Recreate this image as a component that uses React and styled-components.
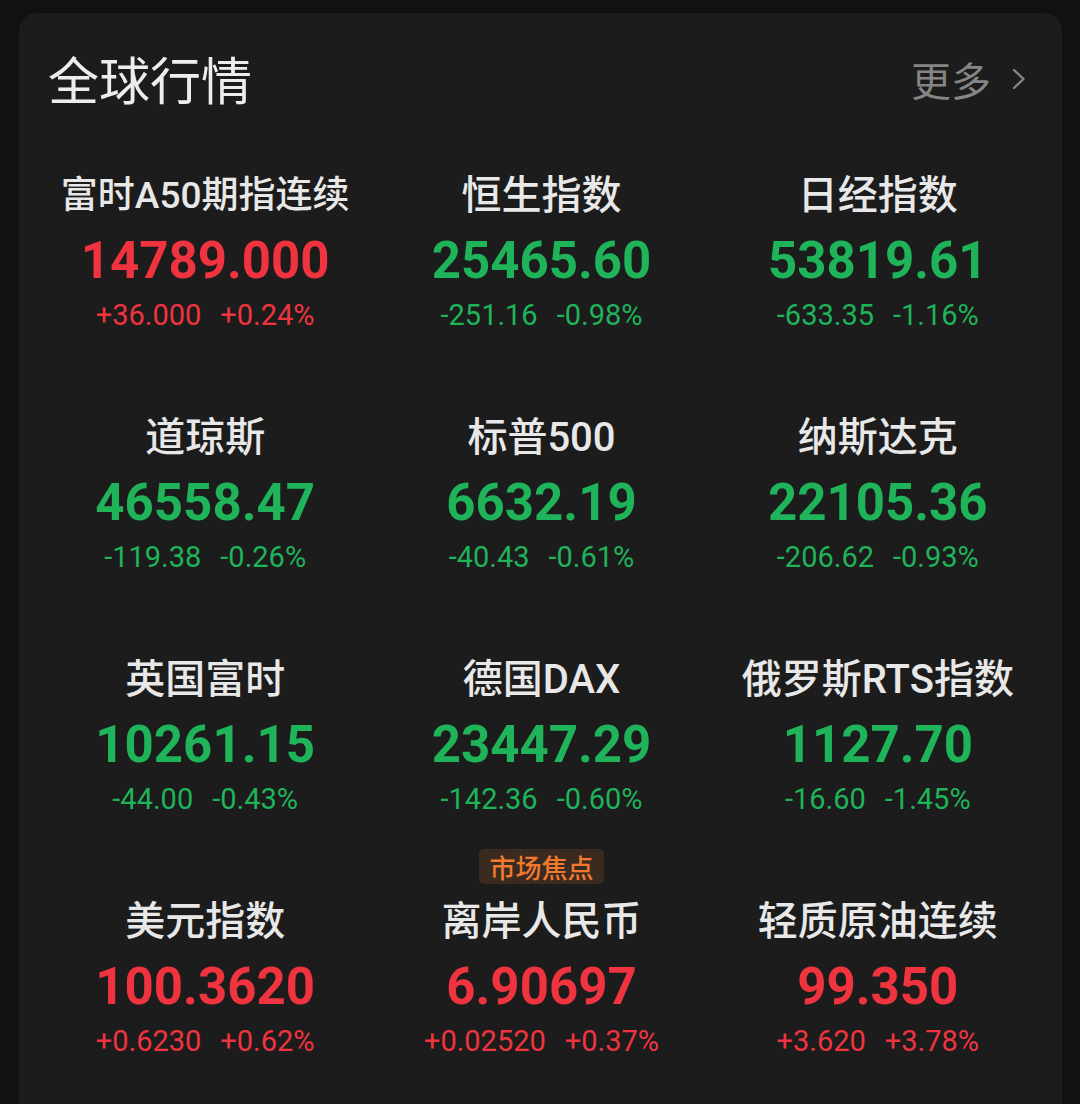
import React from 'react';
import styled, { createGlobalStyle } from 'styled-components';

const GlobalStyle = createGlobalStyle`
  html, body {
    margin: 0;
    padding: 0;
    overflow: hidden;
    background: #111111;
  }
`;

const UP = '#f0343f';
const DOWN = '#1fb35a';

const quotes = [
  { name: '富时A50期指连续', small: true, price: '14789.000', chg: '+36.000', pct: '+0.24%', up: true },
  { name: '恒生指数', price: '25465.60', chg: '-251.16', pct: '-0.98%' },
  { name: '日经指数', price: '53819.61', chg: '-633.35', pct: '-1.16%' },
  { name: '道琼斯', price: '46558.47', chg: '-119.38', pct: '-0.26%' },
  { name: '标普500', price: '6632.19', chg: '-40.43', pct: '-0.61%' },
  { name: '纳斯达克', price: '22105.36', chg: '-206.62', pct: '-0.93%' },
  { name: '英国富时', price: '10261.15', chg: '-44.00', pct: '-0.43%' },
  { name: '德国DAX', price: '23447.29', chg: '-142.36', pct: '-0.60%' },
  { name: '俄罗斯RTS指数', price: '1127.70', chg: '-16.60', pct: '-1.45%' },
  { name: '美元指数', price: '100.3620', chg: '+0.6230', pct: '+0.62%', up: true },
  { name: '离岸人民币', tag: '市场焦点', price: '6.90697', chg: '+0.02520', pct: '+0.37%', up: true },
  { name: '轻质原油连续', price: '99.350', chg: '+3.620', pct: '+3.78%', up: true },
];

const Page = styled.div`
  padding: 13px 18px 0 19px;
`;

const Card = styled.section`
  background: #1c1c1c;
  border-radius: 18px;
  min-height: 1120px;
  padding: 33px 16px 0 18px;
`;

const Header = styled.header`
  display: flex;
  align-items: center;
  justify-content: space-between;
  padding: 0 19px 0 11px;
`;

const Title = styled.h2`
  margin: 0;
  font-family: "Noto Sans CJK SC", sans-serif;
  font-weight: 400;
  font-size: 51px;
  line-height: 62px;
  color: #ededed;
`;

const More = styled.a`
  display: flex;
  align-items: center;
  gap: 20px;
  font-family: "Noto Sans CJK SC", sans-serif;
  font-size: 40px;
  line-height: 62px;
  color: #858585;
  margin-top: 2px;
`;

const Grid = styled.div`
  display: grid;
  grid-template-columns: repeat(3, 1fr);
  margin-top: 22px;
`;

const Cell = styled.div`
  display: flex;
  flex-direction: column;
  align-items: center;
  padding-bottom: 41px;
`;

const TagSlot = styled.div`
  height: 40px;
  display: flex;
  align-items: flex-start;
  justify-content: center;
`;

const Tag = styled.span`
  display: inline-block;
  height: 35px;
  line-height: 35px;
  margin-top: -9px;
  padding: 0 10px;
  border-radius: 5px;
  background: #3a2a20;
  color: #f0792d;
  font-family: "Noto Sans CJK SC", sans-serif;
  font-size: 26px;
  font-weight: 500;
`;

const Name = styled.div`
  font-family: Roboto, "Noto Sans CJK SC", sans-serif;
  font-weight: 500;
  font-size: ${(p) => (p.$small ? '37px' : '40px')};
  line-height: 48px;
  color: #e8e8e8;
  white-space: nowrap;
`;

const Price = styled.div`
  margin-top: 11px;
  font-family: Roboto, sans-serif;
  font-weight: 700;
  font-size: 51px;
  line-height: 60px;
  color: ${(p) => (p.$up ? UP : DOWN)};
`;

const Change = styled.div`
  margin-top: 6px;
  display: flex;
  gap: 19px;
  font-family: Roboto, sans-serif;
  font-weight: 400;
  font-size: 29px;
  line-height: 36px;
  color: ${(p) => (p.$up ? UP : DOWN)};
`;

function Chevron() {
  return (
    <svg width="16" height="26" viewBox="0 0 16 26" fill="none">
      <path d="M3 4 L12.5 13 L3 22" stroke="#858585" strokeWidth="2.4" strokeLinecap="round" strokeLinejoin="round" />
    </svg>
  );
}

export default function App() {
  return (
    <>
      <GlobalStyle />
      <Page>
        <Card>
          <Header>
            <Title>全球行情</Title>
            <More>
              更多
              <Chevron />
            </More>
          </Header>
          <Grid>
            {quotes.map((q) => (
              <Cell key={q.name}>
                <TagSlot>{q.tag && <Tag>{q.tag}</Tag>}</TagSlot>
                <Name $small={q.small}>{q.name}</Name>
                <Price $up={q.up}>{q.price}</Price>
                <Change $up={q.up}>
                  <span>{q.chg}</span>
                  <span>{q.pct}</span>
                </Change>
              </Cell>
            ))}
          </Grid>
        </Card>
      </Page>
    </>
  );
}
